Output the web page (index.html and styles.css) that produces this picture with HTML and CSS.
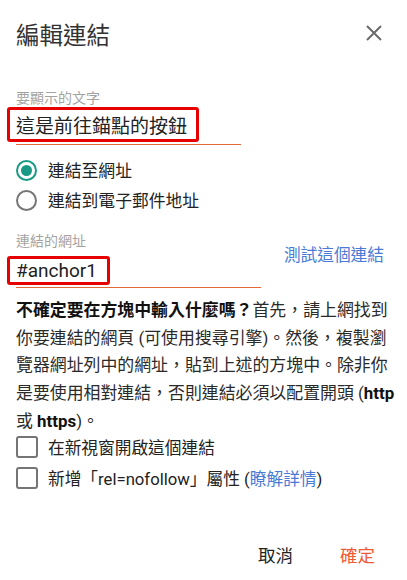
FILE: index.html
```html
<!DOCTYPE html>
<html lang="zh-Hant">
<head>
<meta charset="utf-8">
<title>編輯連結</title>
<link rel="stylesheet" href="styles.css">
</head>
<body>
<div class="dialog">
  <header class="head">
    <h1 class="title">編輯連結</h1>
    <button class="close" aria-label="關閉">
      <svg width="16" height="16" viewBox="0 0 16 16"><path d="M1 1L15 15M15 1L1 15" stroke="#6b6b6b" stroke-width="2" fill="none"/></svg>
    </button>
  </header>

  <div class="field">
    <div class="lbl lbl1">要顯示的文字</div>
    <div class="input input1"><span class="mark mark1">這是前往錨點的按鈕</span></div>
  </div>

  <div class="radios">
    <div class="radio-row"><span class="radio on"></span><span>連結至網址</span></div>
    <div class="radio-row"><span class="radio"></span><span>連結到電子郵件地址</span></div>
  </div>

  <div class="url-row">
    <div class="field">
      <div class="lbl">連結的網址</div>
      <div class="input input2"><span class="mark mark2">#anchor1</span></div>
    </div>
    <a class="test">測試這個連結</a>
  </div>

  <p class="help"><strong>不確定要在方塊中輸入什麼嗎？</strong>首先，請上網找到你要連結的網頁 (可使用搜尋引擎)。然後，複製瀏覽器網址列中的網址，貼到上述的方塊中。除非你是要使用相對連結，否則連結必須以配置開頭 (<strong>http</strong> 或 <strong>https</strong>)。</p>

  <div class="checks">
    <div class="check-row"><span class="cbox"></span><span>在新視窗開啟這個連結</span></div>
    <div class="check-row"><span class="cbox"></span><span>新增「rel=nofollow」屬性 (<a class="more">瞭解詳情</a>)</span></div>
  </div>

  <div class="actions">
    <button class="btn">取消</button>
    <button class="btn ok">確定</button>
  </div>
</div>
</body>
</html>
```

FILE: styles.css
```css
html, body {
  margin: 0;
  background: #ffffff;
}
body {
  font-family: Roboto, "Noto Sans CJK TC", sans-serif;
  color: #222222;
}
.dialog {
  width: 407px;
  height: 580px;
  box-sizing: border-box;
  padding: 0 23px 0 16px;
  overflow: hidden;
}
.head {
  display: flex;
  justify-content: space-between;
  align-items: flex-start;
  padding-top: 20px;
}
.title {
  margin: 0;
  font-size: 23.5px;
  font-weight: 400;
  line-height: 32px;
  color: #333333;
}
.close {
  border: none;
  background: none;
  padding: 0;
  margin: 5px 2px 0 0;
  width: 16px;
  height: 16px;
  display: block;
}
.close svg { display: block; }
.lbl {
  font-size: 14px;
  line-height: 18px;
  color: #a3a3a3;
}
.lbl1 { margin-top: 37px; }
.input {
  display: flex;
  border-bottom: 1px solid #e2683c;
  padding-bottom: 2px;
}
.input1 { width: 225px; }
.input2 { width: 245px; margin-top: 6px; }
.mark {
  display: block;
  border: 3px solid #e60000;
  border-radius: 3px;
  margin-left: -9px;
  font-size: 19px;
  line-height: 22px;
  color: #222222;
}
.mark1 { padding: 6px 9px 1px 6px; }
.mark2 { padding: 1px 10px 0 6px; }
.radios { margin-top: 10px; }
.radio-row {
  display: flex;
  align-items: center;
  gap: 11px;
  height: 30px;
  font-size: 16.8px;
}
.radio {
  width: 21px;
  height: 21px;
  box-sizing: border-box;
  border: 2.5px solid #757575;
  border-radius: 50%;
  display: flex;
  align-items: center;
  justify-content: center;
}
.radio.on { border-color: #1a9985; }
.radio.on::after {
  content: "";
  width: 11px;
  height: 11px;
  border-radius: 50%;
  background: #1a9985;
}
.url-row {
  display: flex;
  justify-content: space-between;
  align-items: flex-start;
  margin-top: 17px;
}
.test {
  margin-top: 13.5px;
  font-size: 16.7px;
  line-height: 20px;
  color: #4a7bd6;
}
.help {
  margin: 9px -12px 0 0;
  font-size: 16.9px;
  line-height: 27.7px;
  color: #2a2a2a;
}
.help strong { font-weight: 700; color: #111111; }
.checks {
  display: flex;
  flex-direction: column;
  gap: 9px;
}
.check-row {
  display: flex;
  align-items: center;
  gap: 10px;
  height: 22px;
  font-size: 16.7px;
}
.cbox {
  width: 22px;
  height: 22px;
  box-sizing: border-box;
  border: 2.5px solid #757575;
  border-radius: 3px;
}
.more { color: #4a7bd6; }
.actions {
  display: flex;
  justify-content: flex-end;
  gap: 47px;
  margin: 57.5px 9px 0 0;
}
.btn {
  border: none;
  background: none;
  padding: 0;
  font-family: inherit;
  font-size: 17.5px;
  line-height: 20px;
  color: #222222;
}
.btn.ok { color: #ee5a35; }
```
